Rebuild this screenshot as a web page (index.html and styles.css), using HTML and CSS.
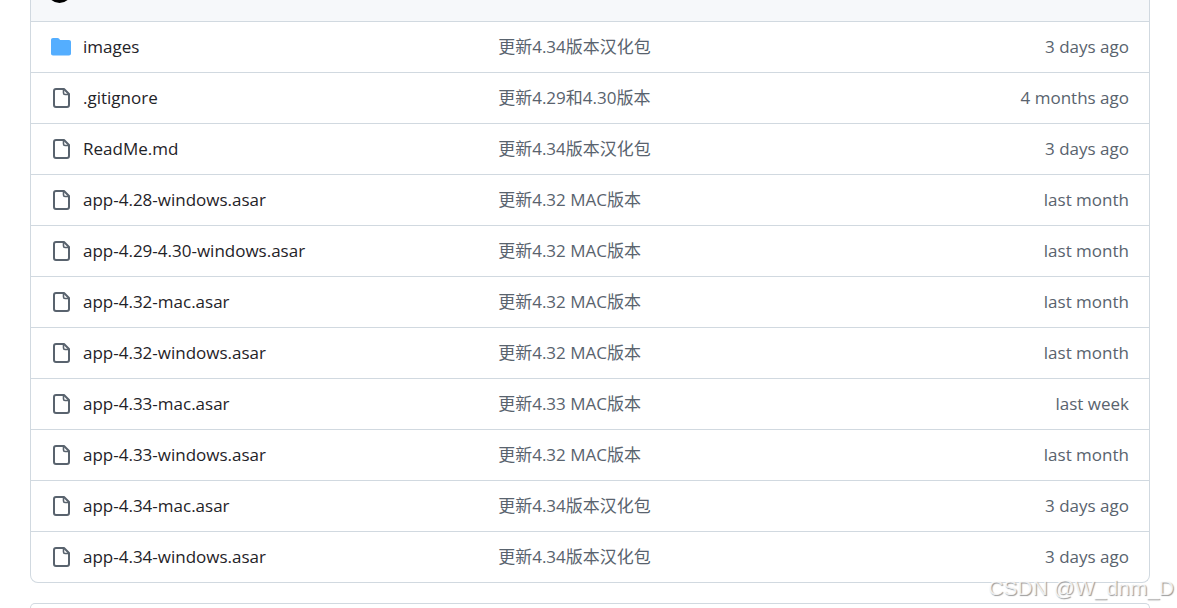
FILE: index.html
```
<!DOCTYPE html>
<html lang="en">
<head>
  <meta charset="UTF-8" />
  <title>Files</title>
  <link rel="stylesheet" href="styles.css">
</head>
<body>
  <svg class="sprite" aria-hidden="true">
    <symbol id="folder" viewBox="0 0 20 20">
      <path d="M2 1C.8 1 0 1.800 0 3V16.500C0 17.800.8 18.500 2 18.500H18C19.200 18.500 20 17.800 20 16.500V5C20 3.800 19.200 3 18 3H9.400C9.200 3 9 2.900 8.900 2.700L8 1.600C7.600 1.200 7.100 1 6.500 1Z" fill="#54aeff"/>
    </symbol>
    <symbol id="file" viewBox="0 0 20 20">
      <path d="M5 1H13L18 6V17Q18 19 16 19H5Q3 19 3 17V3Q3 1 5 1Z" fill="none" stroke="#59636e" stroke-width="2" stroke-linejoin="round"/>
      <path d="M12.500 1V5Q12.500 6.500 14 6.500H18" fill="none" stroke="#59636e" stroke-width="1.600"/>
    </symbol>
  </svg>

  <main class="page">
    <section class="box">
      <div class="box-header">
        <svg class="avatar" viewBox="0 0 20 20"><circle cx="10" cy="10" r="10"/></svg>
      </div>
      <table class="files">
        <tbody id="fileRows"></tbody>
      </table>
    </section>
    <section class="box readme"></section>
  </main>

  <div class="watermark">CSDN @W_dnm_D</div>

  <script>
    const files = [
      ['images', '更新4.34版本汉化包', '3 days ago', 'folder'],
      ['.gitignore', '更新4.29和4.30版本', '4 months ago'],
      ['ReadMe.md', '更新4.34版本汉化包', '3 days ago'],
      ['app-4.28-windows.asar', '更新4.32 MAC版本', 'last month'],
      ['app-4.29-4.30-windows.asar', '更新4.32 MAC版本', 'last month'],
      ['app-4.32-mac.asar', '更新4.32 MAC版本', 'last month'],
      ['app-4.32-windows.asar', '更新4.32 MAC版本', 'last month'],
      ['app-4.33-mac.asar', '更新4.33 MAC版本', 'last week'],
      ['app-4.33-windows.asar', '更新4.32 MAC版本', 'last month'],
      ['app-4.34-mac.asar', '更新4.34版本汉化包', '3 days ago'],
      ['app-4.34-windows.asar', '更新4.34版本汉化包', '3 days ago']
    ];

    document.getElementById('fileRows').innerHTML = files.map(([name, message, age, icon = 'file']) => `
      <tr>
        <td class="name"><div class="name-cell"><svg class="icon"><use href="#${icon}"/></svg><a href="#">${name}</a></div></td>
        <td class="message"><a href="#">${message}</a></td>
        <td class="age">${age}</td>
      </tr>`).join('');
  </script>
</body>
</html>
```
FILE: styles.css
```
body {
  margin: 0;
  background: #fff;
  color: #1f2328;
  font-family: "Segoe UI", "Open Sans", "Noto Sans CJK SC", sans-serif;
  font-size: 17px;
  line-height: 26px;
}

.sprite {
  display: none;
}

.page {
  display: flex;
  flex-direction: column;
  gap: 20px;
  box-sizing: border-box;
  min-height: 100vh;
  padding: 0 27px 0 30px;
}

.box {
  border: 1px solid #d1d9e0;
  border-top: 0;
  border-radius: 0 0 8px 8px;
  overflow: hidden;
}

/* the header is scrolled most of the way out of view */
.box-header {
  display: flex;
  align-items: flex-end;
  box-sizing: border-box;
  height: 21px;
  padding: 0 16px 18px;
  background: #f6f8fa;
  overflow: hidden;
}

.avatar {
  flex: none;
  width: 25px;
  height: 25px;
}

.files {
  width: 100%;
  border-collapse: separate;
  border-spacing: 0;
  table-layout: fixed;
}

.files td {
  height: 50px;
  padding: 0;
  border-top: 1px solid #d1d9e0;
  white-space: nowrap;
}

.files a {
  color: inherit;
  text-decoration: none;
}

.files .name {
  width: 40%;
  padding-left: 20px;
}

.name-cell {
  display: flex;
  align-items: center;
  gap: 12px;
}

.icon {
  flex: none;
  width: 20px;
  height: 20px;
}

.files .message {
  color: #59636e;
}

.files .age {
  width: 160px;
  padding-right: 20px;
  color: #59636e;
  text-align: right;
}

.readme {
  flex: 1;
  border-top: 1px solid #d1d9e0;
  border-bottom: 0;
  border-radius: 8px 8px 0 0;
}

.watermark {
  position: absolute;
  right: 3px;
  bottom: 6px;
  color: rgba(255, 255, 255, 0.8);
  font: 21px/28px "Liberation Sans", sans-serif;
  text-shadow: 1px 1px 1px #999;
}
```
